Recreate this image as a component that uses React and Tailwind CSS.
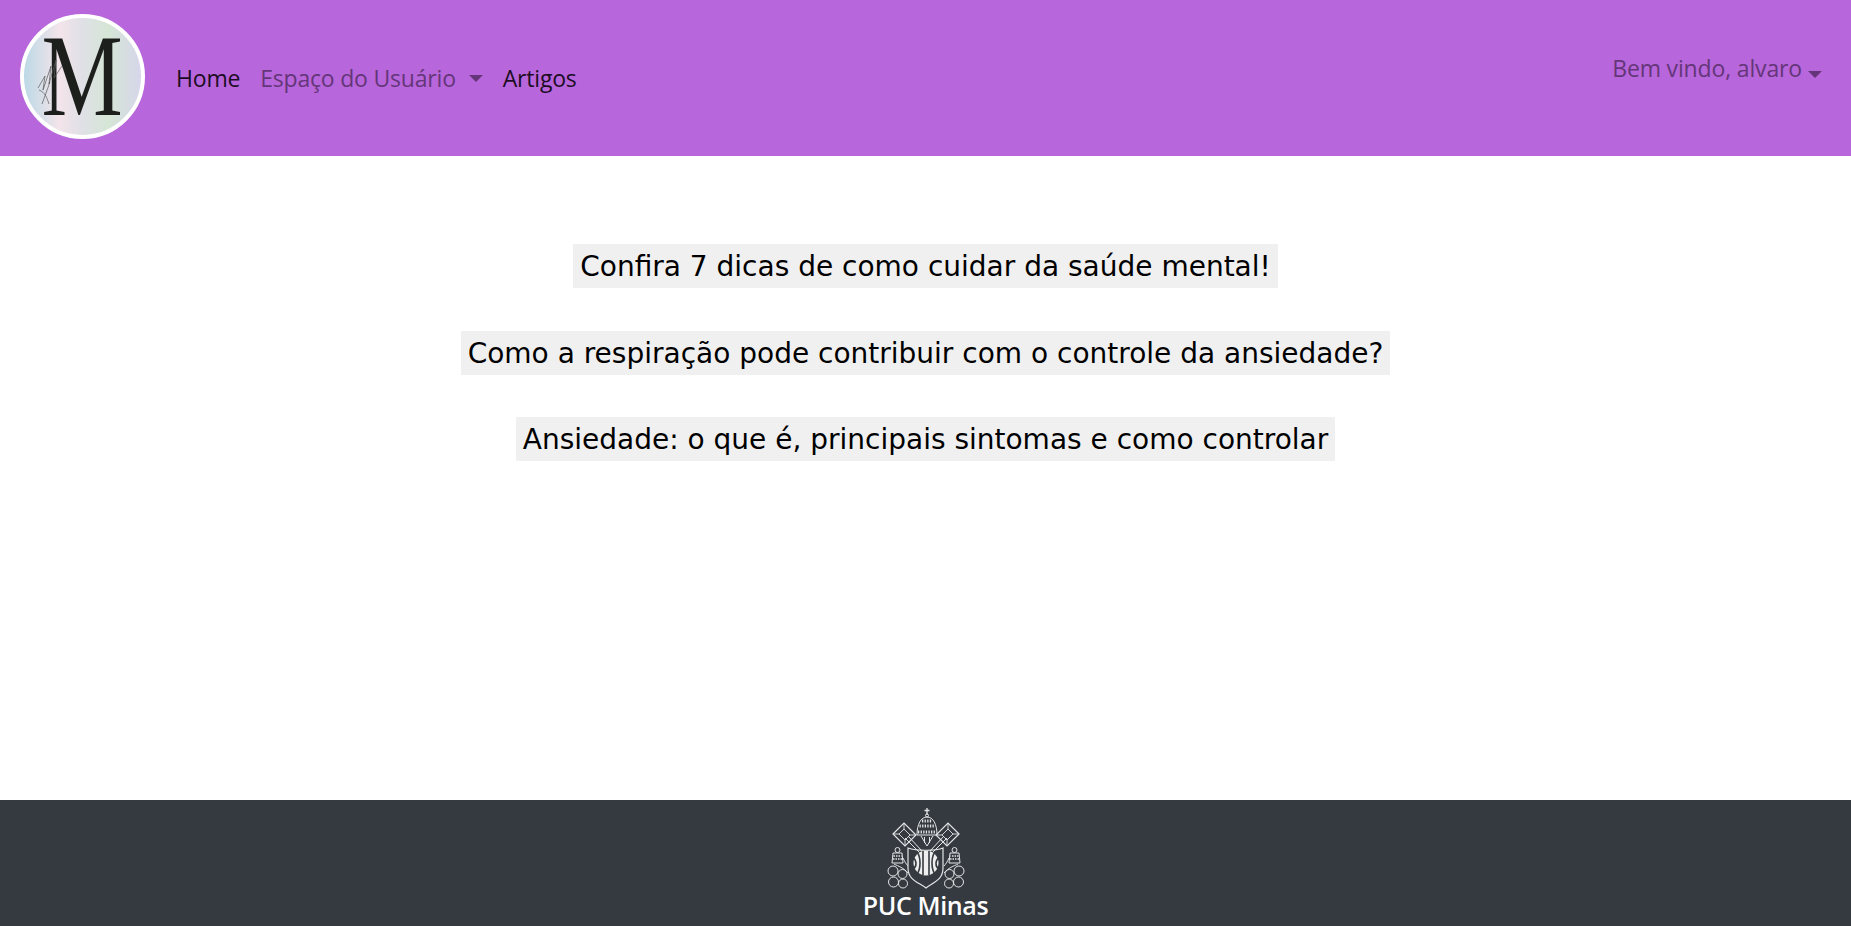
import React from 'react';

const NAV_FONT = 'font-["Open_Sans",sans-serif]';

const articles = [
  'Confira 7 dicas de como cuidar da saúde mental!',
  'Como a respiração pode contribuir com o controle da ansiedade?',
  'Ansiedade: o que é, principais sintomas e como controlar',
];

const Caret = () => (
  <span className="inline-block w-0 h-0 border-x-[7px] border-x-transparent border-t-[7px] border-t-[#643679]" />
);

const Logo = () => (
  <div className="relative w-[125px] h-[125px] mb-[3px] rounded-full border-4 border-white bg-[linear-gradient(90deg,#bcd9e6_0%,#f3e4ea_30%,#dfe0e6_50%,#d5e6d6_72%,#d6d6ea_100%)] flex items-center justify-center shrink-0">
    <span className="font-['Liberation_Serif',serif] text-[117px] leading-none text-[#1d1f1d] scale-x-[0.78] mt-[-3px]">M</span>
    {/* little signature over the left stem */}
    <svg className="absolute left-[13px] top-[40px]" width="26" height="48" viewBox="0 0 26 48" fill="none" stroke="#5a5a5a" strokeWidth="0.7">
      <path d="M1 30 L8 18 L6 32 L14 8 L12 26 L19 2 L17 20 L25 8 M5 46 L13 24 M2 32 C8 34 10 40 12 46" />
    </svg>
  </div>
);

// left half of the coat of arms, mirrored for the right half
const CrestSide = () => (
  <>
    <path d="M42 51 L28 36 M39 52 L25 38" />
    <path d="M13 34 L24 23 L36 35 L25 46 Z" strokeWidth="1.200" />
    <path d="M19 34 L24 29 L30 35 L25 40 Z M24 23 V29 M13 34 H19 M30 35 H36 M25 40 V46" strokeWidth="0.9" />
    <circle cx="17.500" cy="50" r="2.500" />
    <path d="M13 53 H22 L23 63 H12 Z" />
    <path d="M13.500 56 H21.500 M13 59 H22" strokeWidth="1.500" strokeDasharray="1.500 1" />
    <path d="M23 58 C25 62 26 64 28 66 M14 64 C18 66 24 68 28 73" />
    <circle cx="13" cy="71" r="5" />
    <circle cx="22.500" cy="74" r="4.500" />
    <circle cx="13.500" cy="82" r="5" />
    <circle cx="23" cy="83.500" r="4.500" />
  </>
);

const Crest = () => (
  <svg width="92" height="90" viewBox="0 0 92 90" fill="none" stroke="#e4e5e6" strokeWidth="1">
    <path d="M47 8 V15 M44.500 10.500 H49.500" strokeWidth="1.300" />
    <circle cx="47" cy="15.500" r="1.500" />
    <path d="M37 35 C37 24 41 17 47 17 C53 17 57 24 57 35 Z" />
    <path d="M42 21 H52 M39.500 26 H54.500 M38 32 H56" strokeWidth="3" strokeDasharray="1.300 1.300" />
    <path d="M41 36 L47 46 L53 36 M44.500 37 V43 M49.500 37 V43" />
    <CrestSide />
    <g transform="translate(92 0) scale(-1 1)">
      <CrestSide />
    </g>
    <path d="M28 48 C36 51 56 51 63 48 V68 C63 80 54 82 46 88 C38 82 28 80 28 68 Z" strokeWidth="1.200" />
    <circle cx="46" cy="63" r="12.500" fill="#eeeeee" stroke="none" />
    <path d="M43 51 V75 M49 51 V75 M33 58 C37 60 37 67 33 69 M59 58 C55 60 55 67 59 69 M37 52 C41 57 41 69 37 74 M55 52 C51 57 51 69 55 74" stroke="#343a40" strokeWidth="1.600" />
  </svg>
);

export default function App() {
  return (
    <div className="min-h-[926px] flex flex-col bg-white">
      <header className="h-[156px] bg-[#b866db] flex items-center justify-between pl-5 pr-[29px]">
        <div className="flex items-center">
          <Logo />
          <nav className={`flex items-center ml-[31px] gap-5 text-[23px] tracking-[-0.2px] ${NAV_FONT}`}>
            <a className="text-[#1c0d24]">Home</a>
            <a className="text-[#643679] flex items-center gap-[13px]">Espaço do Usuário<Caret /></a>
            <a className="text-[#1c0d24]">Artigos</a>
          </nav>
        </div>
        <div className={`flex items-center gap-[6px] text-[23px] tracking-[-0.15px] text-[#643679] mb-[20px] ${NAV_FONT}`}>
          Bem vindo, alvaro
          <span className="mt-3 flex"><Caret /></span>
        </div>
      </header>

      <main className="flex-1 flex flex-col items-center pt-[88px] gap-[42.5px] font-['DejaVu_Sans',sans-serif] text-[28px] text-black">
        {articles.map((title) => (
          <a key={title} className="bg-[#f0f0f0] px-[7px] pt-[2px] h-11 flex items-center">{title}</a>
        ))}
      </main>

      <footer className="h-[126px] bg-[#343a40] flex flex-col items-center">
        <Crest />
        <span className="font-['Open_Sans',sans-serif] font-semibold text-[25px] leading-none text-white mt-[3px] tracking-[-0.35px]">PUC Minas</span>
      </footer>
    </div>
  );
}
